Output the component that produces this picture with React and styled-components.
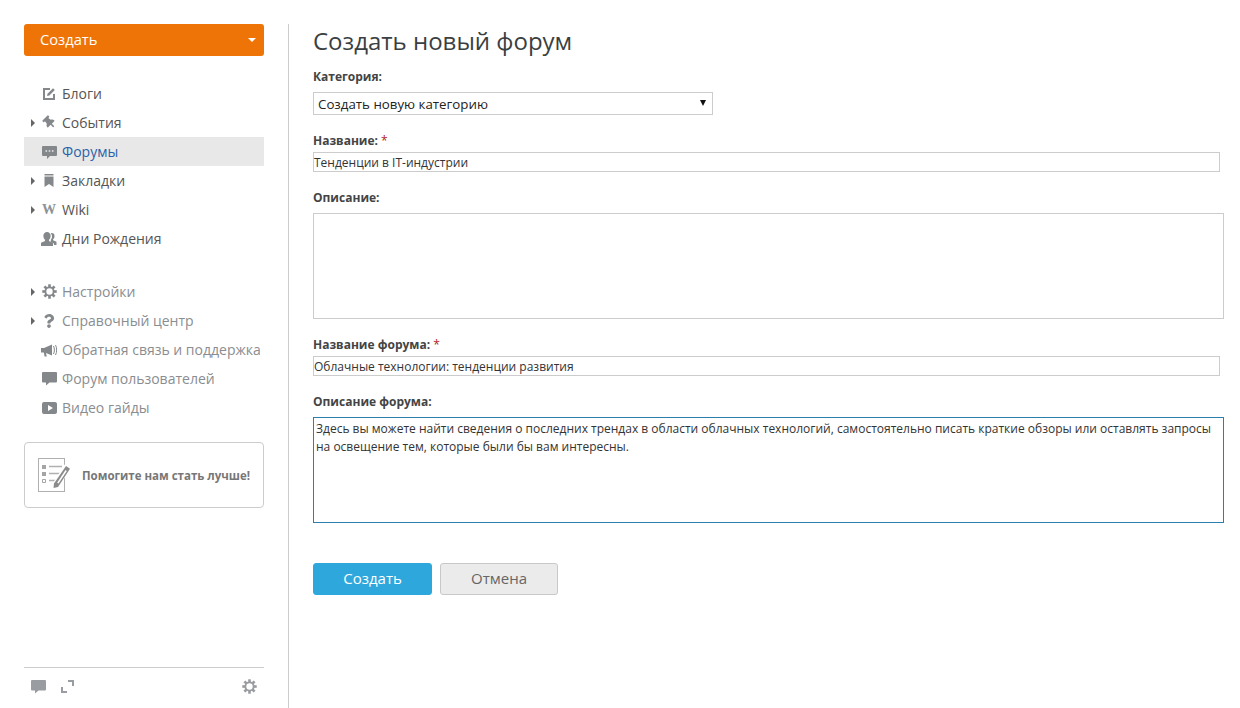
import React from 'react';
import styled, { createGlobalStyle } from 'styled-components';
import { FaQuestion, FaThumbtack } from 'react-icons/fa';

const GlobalStyle = createGlobalStyle`
  html, body {
    margin: 0;
    padding: 0;
    background: #fff;
    font-family: "Open Sans", "Noto Sans", sans-serif;
    overflow: hidden;
  }
`;

const Shell = styled.div`
  display: flex;
  box-sizing: border-box;
  height: 708px;
  padding: 24px 0 0 24px;
`;

const Sidebar = styled.aside`
  width: 240px;
  flex-shrink: 0;
  display: flex;
  flex-direction: column;
`;

const CreateMenu = styled.button`
  height: 32px;
  display: flex;
  align-items: center;
  justify-content: space-between;
  padding: 0 8px 2px 16px;
  border: 0;
  border-radius: 3px;
  background: #ef7407;
  color: #fff;
  font: 14.7px "Open Sans", sans-serif;
`;

const CaretDown = styled.span`
  width: 0;
  height: 0;
  margin-top: 2px;
  border-left: 4px solid transparent;
  border-right: 4px solid transparent;
  border-top: 4px solid #fff;
`;

const Nav = styled.nav`
  margin-top: ${(p) => p.$top}px;
`;

const NavItem = styled.a`
  display: flex;
  align-items: center;
  height: 29px;
  padding-left: 7px;
  font-size: 14px;
  white-space: nowrap;
  color: ${(p) => (p.$active ? '#2a62a8' : p.$muted ? '#8a8d90' : '#555')};
  background: ${(p) => (p.$active ? '#e8e8e8' : 'transparent')};
`;

const CaretSlot = styled.span`
  width: 10px;
  height: 8px;
  flex-shrink: 0;
  display: flex;
  align-items: center;

  &[data-open='true']::before {
    content: '';
    border-top: 4px solid transparent;
    border-bottom: 4px solid transparent;
    border-left: 4px solid #666;
  }
`;

const IconSlot = styled.span`
  width: 16px;
  height: 16px;
  margin-right: 5px;
  flex-shrink: 0;
  display: flex;
  align-items: center;
  justify-content: center;
  color: #85888b;

  svg {
    display: block;
  }
`;

const TiltedPin = styled(FaThumbtack)`
  transform: rotate(-45deg);
`;

const WikiGlyph = styled.span`
  font: 700 14px "Liberation Serif", serif;
  line-height: 16px;
  color: #8f9295;
`;

const FeedbackCard = styled.div`
  margin-top: 20px;
  height: 66px;
  box-sizing: border-box;
  display: flex;
  align-items: center;
  gap: 11px;
  padding-left: 13px;
  border: 1px solid #ccc;
  border-radius: 4px;
  color: #777;
  font-size: 11.5px;
  font-weight: 700;
  white-space: nowrap;
`;

const SidebarFooter = styled.div`
  margin-top: auto;
  height: 41px;
  box-sizing: border-box;
  border-top: 1px solid #ccc;
  display: flex;
  align-items: center;
  padding: 0 7px 3px;
  gap: 15px;
  color: #999ca0;
`;

const FooterGear = styled.span`
  margin-left: auto;
  display: flex;
`;

const Main = styled.main`
  flex: 1;
  margin-left: 24px;
  padding-left: 24px;
  border-left: 1px solid #ccc;
`;

const Title = styled.h1`
  margin: 0 0 10px;
  font-size: 24px;
  line-height: 34px;
  font-weight: 400;
  color: #3b3f42;
`;

const Form = styled.form`
  display: flex;
  flex-direction: column;
  gap: 17px;
`;

const Field = styled.div`
  display: flex;
  flex-direction: column;
  align-items: flex-start;
`;

const Label = styled.label`
  height: 16px;
  font-size: 12px;
  line-height: 18px;
  font-weight: 700;
  color: #444;
`;

const Required = styled.span`
  font-weight: 400;
  color: #b22222;
`;

const SelectWrap = styled.div`
  position: relative;
  margin-top: 8px;
  width: 400px;
  height: 23px;

  &::after {
    content: '';
    position: absolute;
    top: 8px;
    right: 7px;
    border-left: 3.5px solid transparent;
    border-right: 3.5px solid transparent;
    border-top: 6px solid #111;
    pointer-events: none;
  }
`;

const Select = styled.select`
  display: block;
  appearance: none;
  width: 100%;
  height: 100%;
  box-sizing: border-box;
  padding: 0 0 0 4px;
  border: 1px solid #ccc;
  border-radius: 0;
  background: #fff;
  color: #222;
  font: 13.3px "Open Sans", sans-serif;
`;

const TextInput = styled.input`
  margin-top: 4px;
  width: 907px;
  height: 20px;
  box-sizing: border-box;
  padding: 0;
  border: 1px solid #ccc;
  outline: 0;
  color: #333;
  font: 12px "Open Sans", sans-serif;
`;

const TextArea = styled.textarea`
  display: block;
  margin-top: 8px;
  width: 911px;
  height: 106px;
  box-sizing: border-box;
  padding: 2px;
  border: 1px solid ${(p) => (p.$focused ? '#2a7fae' : '#ccc')};
  outline: 0;
  resize: none;
  color: #333;
  font: 12px/18px "Open Sans", sans-serif;
`;

const Actions = styled.div`
  margin-top: 40px;
  display: flex;
  gap: 8px;
`;

const Button = styled.button`
  width: ${(p) => (p.$primary ? 119 : 118)}px;
  height: 32px;
  box-sizing: border-box;
  border: 1px solid ${(p) => (p.$primary ? '#2ea8dc' : '#c8c8c8')};
  border-radius: 3px;
  padding: 0 0 2px;
  background: ${(p) => (p.$primary ? '#2ea8dc' : '#ebebeb')};
  color: ${(p) => (p.$primary ? '#fff' : '#666')};
  font: 15px "Open Sans", sans-serif;
`;

const EditIcon = () => (
  <svg width="13" height="13" viewBox="0 0 13 13">
    <path fill="none" stroke="currentColor" strokeWidth="2" d="M11 7v5H1V2h6" />
    <path fill="currentColor" d="M4.500 6.800 10 1.300l1.800 1.800-5.500 5.500-2.200.4z" />
  </svg>
);

const ForumIcon = () => (
  <svg width="15" height="14" viewBox="0 0 15 14">
    <path fill="currentColor" fillRule="evenodd" d="M1 1h13a1 1 0 0 1 1 1v8a1 1 0 0 1-1 1H8l-3 3v-3H1a1 1 0 0 1-1-1V2a1 1 0 0 1 1-1zM3.500 5.200v1.600h1.600V5.200zm3.200 0v1.600h1.600V5.200zm3.200 0v1.600h1.600V5.200z" />
  </svg>
);

const BookmarkIcon = () => (
  <svg width="10" height="13" viewBox="0 0 10 13">
    <path fill="currentColor" d="M.5 0h9v1.500h-9zM.5 2.500h9V13L5 10l-4.500 3z" />
  </svg>
);

const PeopleIcon = () => (
  <svg width="16" height="14" viewBox="0 0 16 14">
    <path fill="currentColor" d="M10.500 1a3 3 0 0 1 3 3.200c0 1.300-.6 2.500-1.400 3.100v1l3.400 1.500V13H13v-1.500L9.800 9.900V7.700c.8-.8 1.200-2 1.200-3.400 0-1.200-.5-2.300-1.300-3.100.3-.1.500-.2.800-.2z" />
    <path fill="currentColor" d="M6 0a3.600 3.600 0 0 1 3.600 3.900c0 1.500-.6 3-1.600 3.800v1.300l4 1.800V14H0v-3.200L4 9V7.700C3 6.900 2.400 5.400 2.400 3.900A3.600 3.600 0 0 1 6 0z" />
  </svg>
);

const GearIcon = ({ size = 15 }) => (
  <svg width={size} height={size} viewBox="0 0 16 16">
    <circle cx="8" cy="8" r="4.400" fill="none" stroke="currentColor" strokeWidth="2" />
    {[0, 45, 90, 135, 180, 225, 270, 315].map((angle) => (
      <rect key={angle} x="6.600" y="0.300" width="2.800" height="3.200" fill="currentColor" transform={`rotate(${angle} 8 8)`} />
    ))}
  </svg>
);

const HornIcon = () => (
  <svg width="16" height="14" viewBox="0 0 16 14">
    <path fill="currentColor" d="M0 5h3l8-3.500v11L5 10l.8 3.500H3.600L2.800 9.500H0z" />
    <path fill="none" stroke="currentColor" strokeWidth="1" d="M12.500 3c1.200 2.500 1.200 5.500 0 8M14.500 2c1.600 3 1.600 7 0 10" />
  </svg>
);

const BubbleIcon = ({ size = 15 }) => (
  <svg width={size} height={size} viewBox="0 0 15 15">
    <path fill="currentColor" d="M1 1h13a1 1 0 0 1 1 1v8.500a1 1 0 0 1-1 1H7.500L4 14.500v-3H1a1 1 0 0 1-1-1V2a1 1 0 0 1 1-1z" />
  </svg>
);

const VideoIcon = () => (
  <svg width="15" height="12" viewBox="0 0 15 12">
    <path fill="currentColor" fillRule="evenodd" d="M2 0h11a2 2 0 0 1 2 2v8a2 2 0 0 1-2 2H2a2 2 0 0 1-2-2V2a2 2 0 0 1 2-2zm4 3v6l5-3z" />
  </svg>
);

const ExpandIcon = () => (
  <svg width="13" height="13" viewBox="0 0 13 13">
    <path fill="none" stroke="currentColor" strokeWidth="2" d="M7 1h5v5M1 7v5h5" />
  </svg>
);

const FormIcon = () => (
  <svg width="33" height="34" viewBox="0 0 33 34">
    <rect x="0.500" y="0.500" width="26" height="33" fill="#fff" stroke="#b0b0b0" />
    <path fill="#a5a5a5" d="M4 7h4v4H4zM4 14h4v4H4z" />
    <path fill="none" stroke="#a5a5a5" d="M4.500 21.500h3v3h-3z" />
    <path stroke="#b0b0b0" strokeWidth="1.500" d="M11 8.500h13M11 15.500h12M11 22.500h7" />
    <path fill="#fff" d="M27 6l6 4-13 20-6 1 1-6z" />
    <path fill="#8b8b8b" d="M28 8l4 2.700L20 29l-4.500 1 .5-4.500z" />
    <path fill="#fff" d="M27.500 12l1.300.9-8.300 12.700-1.300-.9z" />
  </svg>
);

const primaryLinks = [
  { label: 'Блоги', icon: <EditIcon /> },
  { label: 'События', icon: <TiltedPin size={13} />, expandable: true },
  { label: 'Форумы', icon: <ForumIcon />, active: true },
  { label: 'Закладки', icon: <BookmarkIcon />, expandable: true },
  { label: 'Wiki', icon: <WikiGlyph>W</WikiGlyph>, expandable: true },
  { label: 'Дни Рождения', icon: <PeopleIcon /> },
];

const secondaryLinks = [
  { label: 'Настройки', icon: <GearIcon size={15} />, expandable: true },
  { label: 'Справочный центр', icon: <FaQuestion size={14} />, expandable: true },
  { label: 'Обратная связь и поддержка', icon: <HornIcon /> },
  { label: 'Форум пользователей', icon: <BubbleIcon /> },
  { label: 'Видео гайды', icon: <VideoIcon /> },
];

const NavLinks = ({ links, top, muted }) => (
  <Nav $top={top}>
    {links.map((link) => (
      <NavItem key={link.label} $active={link.active} $muted={muted}>
        <CaretSlot data-open={!!link.expandable} />
        <IconSlot>{link.icon}</IconSlot>
        {link.label}
      </NavItem>
    ))}
  </Nav>
);

const noop = () => {};

const App = () => (
  <>
    <GlobalStyle />
    <Shell>
      <Sidebar>
        <CreateMenu type="button">
          Создать
          <CaretDown />
        </CreateMenu>
        <NavLinks links={primaryLinks} top={23} />
        <NavLinks links={secondaryLinks} top={24} muted />
        <FeedbackCard>
          <FormIcon />
          Помогите нам стать лучше!
        </FeedbackCard>
        <SidebarFooter>
          <BubbleIcon size={15} />
          <ExpandIcon />
          <FooterGear>
            <GearIcon size={15} />
          </FooterGear>
        </SidebarFooter>
      </Sidebar>
      <Main>
        <Title>Создать новый форум</Title>
        <Form>
          <Field>
            <Label>Категория:</Label>
            <SelectWrap>
              <Select value="new" onChange={noop}>
                <option value="new">Создать новую категорию</option>
              </Select>
            </SelectWrap>
          </Field>
          <Field>
            <Label>
              Название: <Required>*</Required>
            </Label>
            <TextInput value="Тенденции в IT-индустрии" onChange={noop} />
          </Field>
          <Field>
            <Label>Описание:</Label>
            <TextArea value="" onChange={noop} />
          </Field>
          <Field>
            <Label>
              Название форума: <Required>*</Required>
            </Label>
            <TextInput value="Облачные технологии: тенденции развития" onChange={noop} />
          </Field>
          <Field>
            <Label>Описание форума:</Label>
            <TextArea
              $focused
              onChange={noop}
              value="Здесь вы можете найти сведения о последних трендах в области облачных технологий, самостоятельно писать краткие обзоры или оставлять запросы на освещение тем, которые были бы вам интересны."
            />
          </Field>
        </Form>
        <Actions>
          <Button type="button" $primary>Создать</Button>
          <Button type="button">Отмена</Button>
        </Actions>
      </Main>
    </Shell>
  </>
);

export default App;
